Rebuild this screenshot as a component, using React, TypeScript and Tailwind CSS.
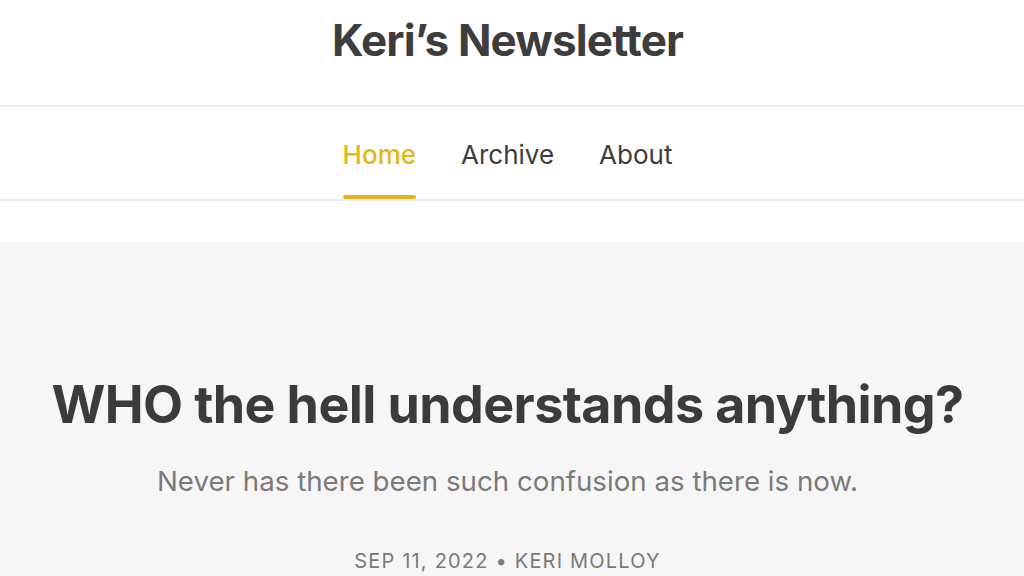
export default function App() {
  return (
    <div className="w-[1024px] h-[576px] overflow-hidden bg-white" style={{ fontFamily: 'Inter, "Noto Sans", sans-serif' }}>
      <header className="h-[107px] flex items-center justify-center border-b-2 border-[#ececec] pr-[9px]">
        <h1 className="text-[44px] text-[#3d3d3d] tracking-[-0.85px] leading-none pb-[26px]" style={{ fontWeight: 650 }}>Keri’s Newsletter</h1>
      </header>
      <nav className="h-[94px] flex justify-center gap-[45px] border-b-2 border-[#ececec] pr-[9px]">
        <a className="relative flex items-center text-[26px] font-medium text-[#e6b714] pt-[3px]">
          Home
          <span className="absolute left-0 right-0 bottom-[0px] h-[4px] bg-[#e6b714] rounded-sm" />
        </a>
        <a className="flex items-center text-[26px] text-[#3d3d3d] pt-[3px]">Archive</a>
        <a className="flex items-center text-[26px] text-[#3d3d3d] pt-[3px]">About</a>
      </nav>
      <div className="h-[41px]" />
      <main className="bg-[#f6f6f6] h-[400px] flex flex-col items-center pt-[137px] pr-[9px]">
        <h2 className="text-[52px] font-bold text-[#3b3b3b] leading-none tracking-[-0.6px]">WHO the hell understands anything?</h2>
        <p className="mt-[37px] text-[27.7px] text-[#7a7a7a] leading-none">Never has there been such confusion as there is now.</p>
        <p className="mt-[55px] text-[20px] text-[#7a7a7a] uppercase tracking-[1.2px] leading-none">Sep 11, 2022 • Keri Molloy</p>
      </main>
    </div>
  );
}
